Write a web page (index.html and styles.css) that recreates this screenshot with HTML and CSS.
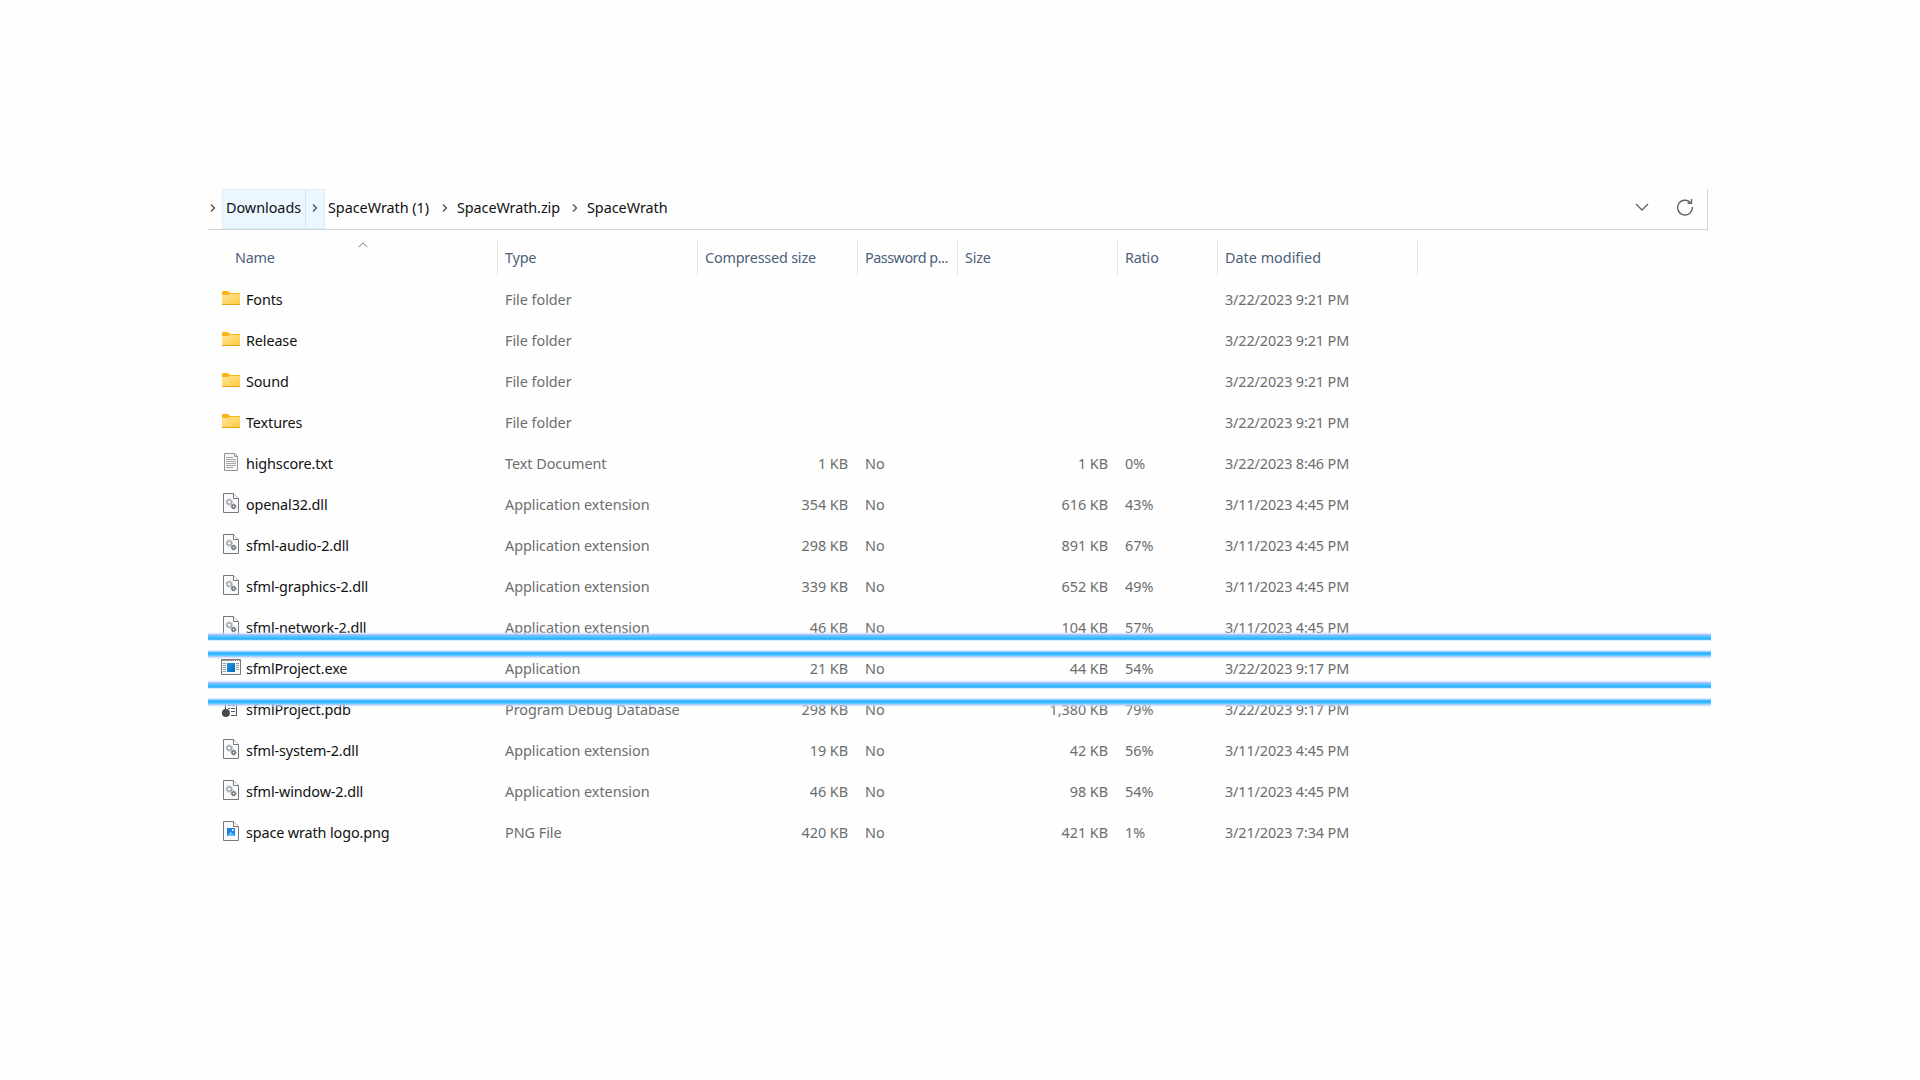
FILE: index.html
```html
<!DOCTYPE html>
<html lang="en">
<head>
<meta charset="utf-8">
<title>SpaceWrath</title>
<link rel="stylesheet" href="styles.css">
</head>
<body>
<svg class="defs" aria-hidden="true">
  <defs>
    <linearGradient id="gold" x1="0" y1="0" x2="1" y2="1"><stop offset="0" stop-color="#ffe69b"/><stop offset="1" stop-color="#ffc93c"/></linearGradient>
    <linearGradient id="blue" x1="0" y1="0" x2="1" y2="1"><stop offset="0" stop-color="#1b9be6"/><stop offset="1" stop-color="#0a62b8"/></linearGradient>
    <symbol id="folder" viewBox="0 0 20 20"><path d="M1 4Q1 3 2 3H7L9 5H19V8H1Z" fill="#fbb615"/><path d="M1 7H7.300L8.800 6H19V17H1Z" fill="url(#gold)"/><path d="M1 16.500H19" stroke="#e5a31c"/></symbol>
    <symbol id="txt" viewBox="0 0 20 20"><path d="M3.500 1.500H13.500L16.500 4.500V18.500H3.500Z" fill="#f7f7f7" stroke="#929292"/><path d="M13.500 1.500V4.500H16.500" fill="none" stroke="#929292"/><path d="M5 5.500H12M5 7.500H15M5 9.500H15M5 11.500H15M5 13.500H15M5 15.500H12" stroke="#a5a5a5"/></symbol>
    <symbol id="page" viewBox="0 0 20 20"><path d="M2.500.5H12.500L17.500 5.500V19.500H2.500Z" fill="#fafafa" stroke="#777"/><path d="M12.500.5V5.500H17.500" fill="#fff" stroke="#777"/></symbol>
    <symbol id="dll" viewBox="0 0 20 20"><use href="#page"/><circle cx="8.300" cy="9" r="2.200" fill="none" stroke="#9aa5b1" stroke-width="1.300"/><circle cx="8.300" cy="9" r="3.200" fill="none" stroke="#9aa5b1" stroke-dasharray="1.200 1.310"/><circle cx="12.600" cy="13.500" r="1.600" fill="none" stroke="#5c6873" stroke-width="1.300"/><circle cx="12.600" cy="13.500" r="2.400" fill="none" stroke="#5c6873" stroke-dasharray="1 .885"/></symbol>
    <symbol id="png" viewBox="0 0 20 20"><use href="#page"/><rect x="6" y="7" width="8" height="8" fill="#1f7fe0"/><path d="M6 15L9.800 10.500L14 15Z" fill="#5cc4f5"/><circle cx="11.800" cy="9" r="1" fill="#fff"/></symbol>
    <symbol id="exe" viewBox="0 0 20 20"><path d="M.5 2.500H19.500V17.500H.5Z" fill="#f8f8f8" stroke="#777"/><path d="M1 3.500H13" stroke="#999"/><path d="M14 3.500H19" stroke="#777" stroke-dasharray="1 1"/><path d="M2 6.500H5M2 8.500H5M2 10.500H5M2 12.500H5M2 14.500H5M15 6.500H18M15 8.500H18M15 10.500H18M15 12.500H18" stroke="#999"/><rect x="6" y="6" width="8" height="9" fill="url(#blue)"/></symbol>
    <symbol id="pdb" viewBox="0 0 20 20"><path d="M4.500 11V3.500H15.500V17.500H10" fill="#f8f8f8" stroke="#555"/><path d="M7 7.500H10M11 7.500H14M7 10.500H9M10 10.500H14M10 13.500H14" stroke="#555"/><circle cx="4.900" cy="15" r="4" fill="#45484c"/></symbol>
  </defs>
</svg>
<main class="explorer">
  <nav class="address">
    <span class="chev"><svg viewBox="0 0 6 8"><path d="M1 .5L4.500 4L1 7.500"/></svg></span>
    <span class="crumb hot"><span class="label s1">Downloads</span><span class="chev"><svg viewBox="0 0 6 8"><path d="M1 .5L4.500 4L1 7.500"/></svg></span></span>
    <span class="crumb"><span class="label s2">SpaceWrath (1)</span><span class="chev"><svg viewBox="0 0 6 8"><path d="M1 .5L4.500 4L1 7.500"/></svg></span></span>
    <span class="crumb"><span class="label s3">SpaceWrath.zip</span><span class="chev"><svg viewBox="0 0 6 8"><path d="M1 .5L4.500 4L1 7.500"/></svg></span></span>
    <span class="crumb"><span class="label s4">SpaceWrath</span></span>
    <span class="tools">
      <svg class="down" viewBox="0 0 14 8"><path d="M1 1L7 7L13 1"/></svg>
      <svg class="reload" viewBox="0 0 18 18"><path d="M14.300 4.400A7.400 7.400 0 1 0 16.400 9M15.500 1V5.200H11.500"/></svg>
    </span>
  </nav>
  <div class="grid head">
    <span>Name<svg class="sort" viewBox="0 0 10 6"><path d="M.7 5L5 .8L9.300 5"/></svg></span><span>Type</span><span>Compressed size</span><span class="tight">Password p...</span><span>Size</span><span>Ratio</span><span class="wide">Date modified</span>
  </div>
  <div class="rows" id="rows"></div>
  <div class="mark first"></div>
  <div class="mark second"></div>
</main>
<script src="rows.js"></script>
</body>
</html>
```
FILE: styles.css
```css
body { margin: 0; background: #fefefe; font-family: "Noto Sans", sans-serif; font-size: 14.4px; color: #111; }
.defs { position: absolute; width: 0; height: 0; }
.explorer { position: relative; width: 1503px; margin: 189px 0 0 208px; }
.address { display: flex; align-items: stretch; box-sizing: border-box; width: 1500px; height: 41px; border-right: 1px solid #d4d4d4; border-bottom: 1px solid #d4d4d4; line-height: 37px; }
.address > .chev { width: 14px; justify-content: flex-start; padding-left: 2px; box-sizing: border-box; }
.chev { display: flex; align-items: center; justify-content: center; box-sizing: border-box; width: 18px; height: 38px; padding-right: 1px; }
.chev svg { width: 6px; height: 8px; fill: none; stroke: #555; stroke-width: 1.4; }
.crumb { display: flex; height: 40px; }
.label { box-sizing: border-box; padding-left: 4px; white-space: nowrap; letter-spacing: -.03px; }
.s1 { width: 83px; }
.s2 { width: 111px; padding-left: 3px; }
.s3 { width: 112px; padding-left: 3px; letter-spacing: -.08px; }
.s4 { padding-left: 3px; }
.hot { height: 40px; background: #ebf6ff; box-shadow: inset 0 0 0 1px #d9edfb; }
.hot .chev { width: 20px; height: 40px; border-left: 1px solid #d0e8f8; padding: 0 2px 2px 0; }
.tools { display: flex; align-items: center; gap: 27px; height: 36px; margin-left: auto; padding-right: 13px; }
.tools svg { fill: none; stroke: #666; stroke-width: 1.4; }
.down { width: 14px; height: 8px; }
.reload { width: 18px; height: 18px; }
.grid { display: grid; grid-template-columns: 289px 200px 160px 100px 160px 100px 200px; }
.head { grid-template-columns: 290px 200px 160px 100px 160px 100px 200px; height: 32px; margin: 11px 0 6px; color: #4c607a; line-height: 34px; }
.head span { position: relative; padding-left: 7px; border-right: 1px solid #e2e2e2; white-space: nowrap; letter-spacing: -.2px; }
.head span:first-child { padding-left: 27px; }
.head .tight { letter-spacing: -.5px; }
.head .wide { letter-spacing: 0; }
.sort { position: absolute; left: 150px; top: 1px; width: 10px; height: 6px; fill: none; stroke: #777; }
.row { height: 41px; line-height: 41px; color: #6d6d6d; letter-spacing: -.04px; }
.row span { padding-left: 8px; white-space: nowrap; }
.row .name { display: flex; align-items: flex-start; gap: 5px; padding-left: 13px; color: #111; letter-spacing: -.12px; }
.row .num { text-align: right; padding: 0 9px 0 0; }
.row .date { letter-spacing: -.12px; }
.icon { width: 20px; height: 20px; margin-top: 9px; flex: none; }
.mark { position: absolute; left: 0; width: 1503px; height: 27px; background: linear-gradient(#d9e4fb55 0 1px, #cbdafa99 1px 2px, #9cc0f6dd 2px 3px, #83bff8 3px 4px, #4fc3ff 4px 5px, #46c0ff 5px 6px, #29b0ff 6px 7px, #4cbcff 7px 8px, #d5ecff 8px 9px, #fefefe 9px 18px, #d5e9fd 18px 19px, #9fd4fd 19px 20px, #3fbcff 20px 21px, #29b0ff 21px 22px, #46c0ff 22px 23px, #5bcaff 23px 24px, #9cc6f8dd 24px 25px, #c4d9f9aa 25px 26px, #dfeafd66 26px 27px); }
.first { top: 443px; }
.second { top: 491px; }
```
FILE: rows.js
```js
const files = [
  ["folder", "Fonts", "File folder", "", "", "", "", "3/22/2023 9:21 PM"],
  ["folder", "Release", "File folder", "", "", "", "", "3/22/2023 9:21 PM"],
  ["folder", "Sound", "File folder", "", "", "", "", "3/22/2023 9:21 PM"],
  ["folder", "Textures", "File folder", "", "", "", "", "3/22/2023 9:21 PM"],
  ["txt", "highscore.txt", "Text Document", "1 KB", "No", "1 KB", "0%", "3/22/2023 8:46 PM"],
  ["dll", "openal32.dll", "Application extension", "354 KB", "No", "616 KB", "43%", "3/11/2023 4:45 PM"],
  ["dll", "sfml-audio-2.dll", "Application extension", "298 KB", "No", "891 KB", "67%", "3/11/2023 4:45 PM"],
  ["dll", "sfml-graphics-2.dll", "Application extension", "339 KB", "No", "652 KB", "49%", "3/11/2023 4:45 PM"],
  ["dll", "sfml-network-2.dll", "Application extension", "46 KB", "No", "104 KB", "57%", "3/11/2023 4:45 PM"],
  ["exe", "sfmlProject.exe", "Application", "21 KB", "No", "44 KB", "54%", "3/22/2023 9:17 PM"],
  ["pdb", "sfmlProject.pdb", "Program Debug Database", "298 KB", "No", "1,380 KB", "79%", "3/22/2023 9:17 PM"],
  ["dll", "sfml-system-2.dll", "Application extension", "19 KB", "No", "42 KB", "56%", "3/11/2023 4:45 PM"],
  ["dll", "sfml-window-2.dll", "Application extension", "46 KB", "No", "98 KB", "54%", "3/11/2023 4:45 PM"],
  ["png", "space wrath logo.png", "PNG File", "420 KB", "No", "421 KB", "1%", "3/21/2023 7:34 PM"]
];
document.getElementById("rows").innerHTML = files.map(([icon, name, type, packed, pw, size, ratio, date]) =>
  `<div class="grid row"><div class="name"><svg class="icon"><use href="#${icon}"/></svg><div class="fname">${name}</div></div><span>${type}</span><span class="num">${packed}</span><span>${pw}</span><span class="num">${size}</span><span>${ratio}</span><span class="date">${date}</span></div>`).join("");
```
